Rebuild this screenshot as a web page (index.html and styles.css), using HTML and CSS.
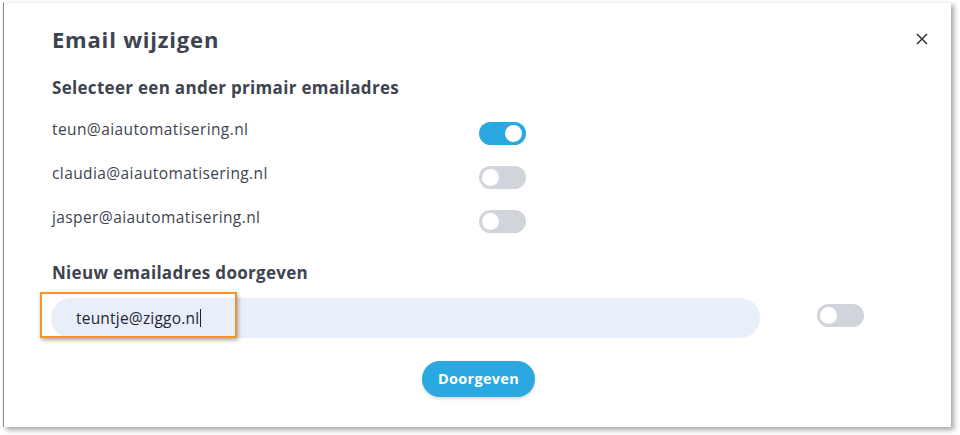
FILE: index.html
```html
<html>
  <head>
    <title>Email wijzigen</title>
    <meta name="viewport" content="width=device-width, initial-scale=1.0" />
    <link rel="stylesheet" href="styles.css">
  </head>
  <body>
    <div class='modal'>
      <div class='modal-head'>
        <h1>Email wijzigen</h1>
        <span class='close'>
          <svg width='12' height='12' viewBox='0 0 12 12'><path d='M1 1 L11 11 M11 1 L1 11' stroke='#333' stroke-width='1.5' fill='none'/></svg>
        </span>
      </div>

      <h2>Selecteer een ander primair emailadres</h2>
      <div class='choices'>
        <div class='choice'>
          <span class='addr'>teun@aiautomatisering.nl</span>
          <span class='toggle on'><span class='knob'></span></span>
        </div>
        <div class='choice'>
          <span class='addr'>claudia@aiautomatisering.nl</span>
          <span class='toggle'><span class='knob'></span></span>
        </div>
        <div class='choice'>
          <span class='addr'>jasper@aiautomatisering.nl</span>
          <span class='toggle'><span class='knob'></span></span>
        </div>
      </div>

      <h2 class='new'>Nieuw emailadres doorgeven</h2>
      <div class='new-row'>
        <div class='field'>
          <span class='value'>teuntje@ziggo.nl</span><span class='caret'></span>
          <div class='highlight'></div>
        </div>
        <span class='toggle'><span class='knob'></span></span>
      </div>

      <div class='actions'>
        <button>Doorgeven</button>
      </div>
    </div>
  </body>
</html>
```

FILE: styles.css
```css
body {
  background:#fff;
  color:#3d4450;
  font:15.5px/20px 'Open Sans', sans-serif;
  letter-spacing:0.4px;
  margin:0;
  padding:0;
}

.modal {
  margin:2px 0 0 3px;
  width:948px;
  height:425px;
  box-sizing:border-box;
  background:#fff;
  border-left:1px solid #8a8a8a;
  border-top:1px solid #efefef;
  box-shadow:3px 3px 5px rgba(0,0,0,0.35);
  padding:0 0 0 48px;
}

.modal-head {
  display:flex;
  justify-content:space-between;
  align-items:center;
  padding:22px 22px 0 0;
}

h1 {
  font:bold 22px/28px 'Open Sans', sans-serif;
  letter-spacing:0.8px;
  color:#3d4450;
  margin:0;
}

.close {
  display:flex;
  margin-right:1px;
}

h2 {
  font:bold 17px/22px 'Open Sans', sans-serif;
  letter-spacing:0.3px;
  color:#3d4450;
  margin:24px 0 0 0;
}

.choices {
  margin-top:12px;
}

.choice {
  display:flex;
  align-items:center;
  height:44px;
}

.addr {
  width:427px;
  margin-top:-8px;
}

.toggle {
  display:inline-block;
  position:relative;
  width:47px;
  height:23px;
  border-radius:12px;
  background:#d1d5db;
}

.toggle .knob {
  position:absolute;
  top:3px;
  left:3px;
  width:17px;
  height:17px;
  border-radius:50%;
  background:#fff;
}

.toggle.on {
  background:#29a9e0;
}

.toggle.on .knob {
  left:auto;
  right:4px;
}

h2.new {
  margin-top:19px;
}

.new-row {
  display:flex;
  align-items:center;
  margin-top:14px;
}

.field {
  position:relative;
  width:709px;
  height:40px;
  box-sizing:border-box;
  border-radius:20px;
  background:#e8effb;
  padding:0 0 0 25px;
  display:flex;
  align-items:center;
  margin-left:-1px;
  color:#1f2430;
  letter-spacing:0.2px;
}

.caret {
  display:inline-block;
  width:1px;
  height:18px;
  background:#222;
  margin-left:1px;
}

.highlight {
  position:absolute;
  left:-11px;
  top:-6px;
  width:193px;
  height:42px;
  border:2.5px solid #f7931e;
  box-shadow:1px 2px 4px rgba(0,0,0,0.35);
}

.new-row .toggle {
  margin-left:57px;
  margin-top:-5px;
}

.actions {
  display:flex;
  padding-left:370px;
  margin-top:23px;
}

button {
  font:bold 14.5px/20px 'Open Sans', sans-serif;
  letter-spacing:0.3px;
  color:#fff;
  background:#29a9e0;
  border:none;
  border-radius:18px;
  width:113px;
  height:36px;
  box-shadow:0 2px 3px rgba(0,0,0,0.15);
}
```
